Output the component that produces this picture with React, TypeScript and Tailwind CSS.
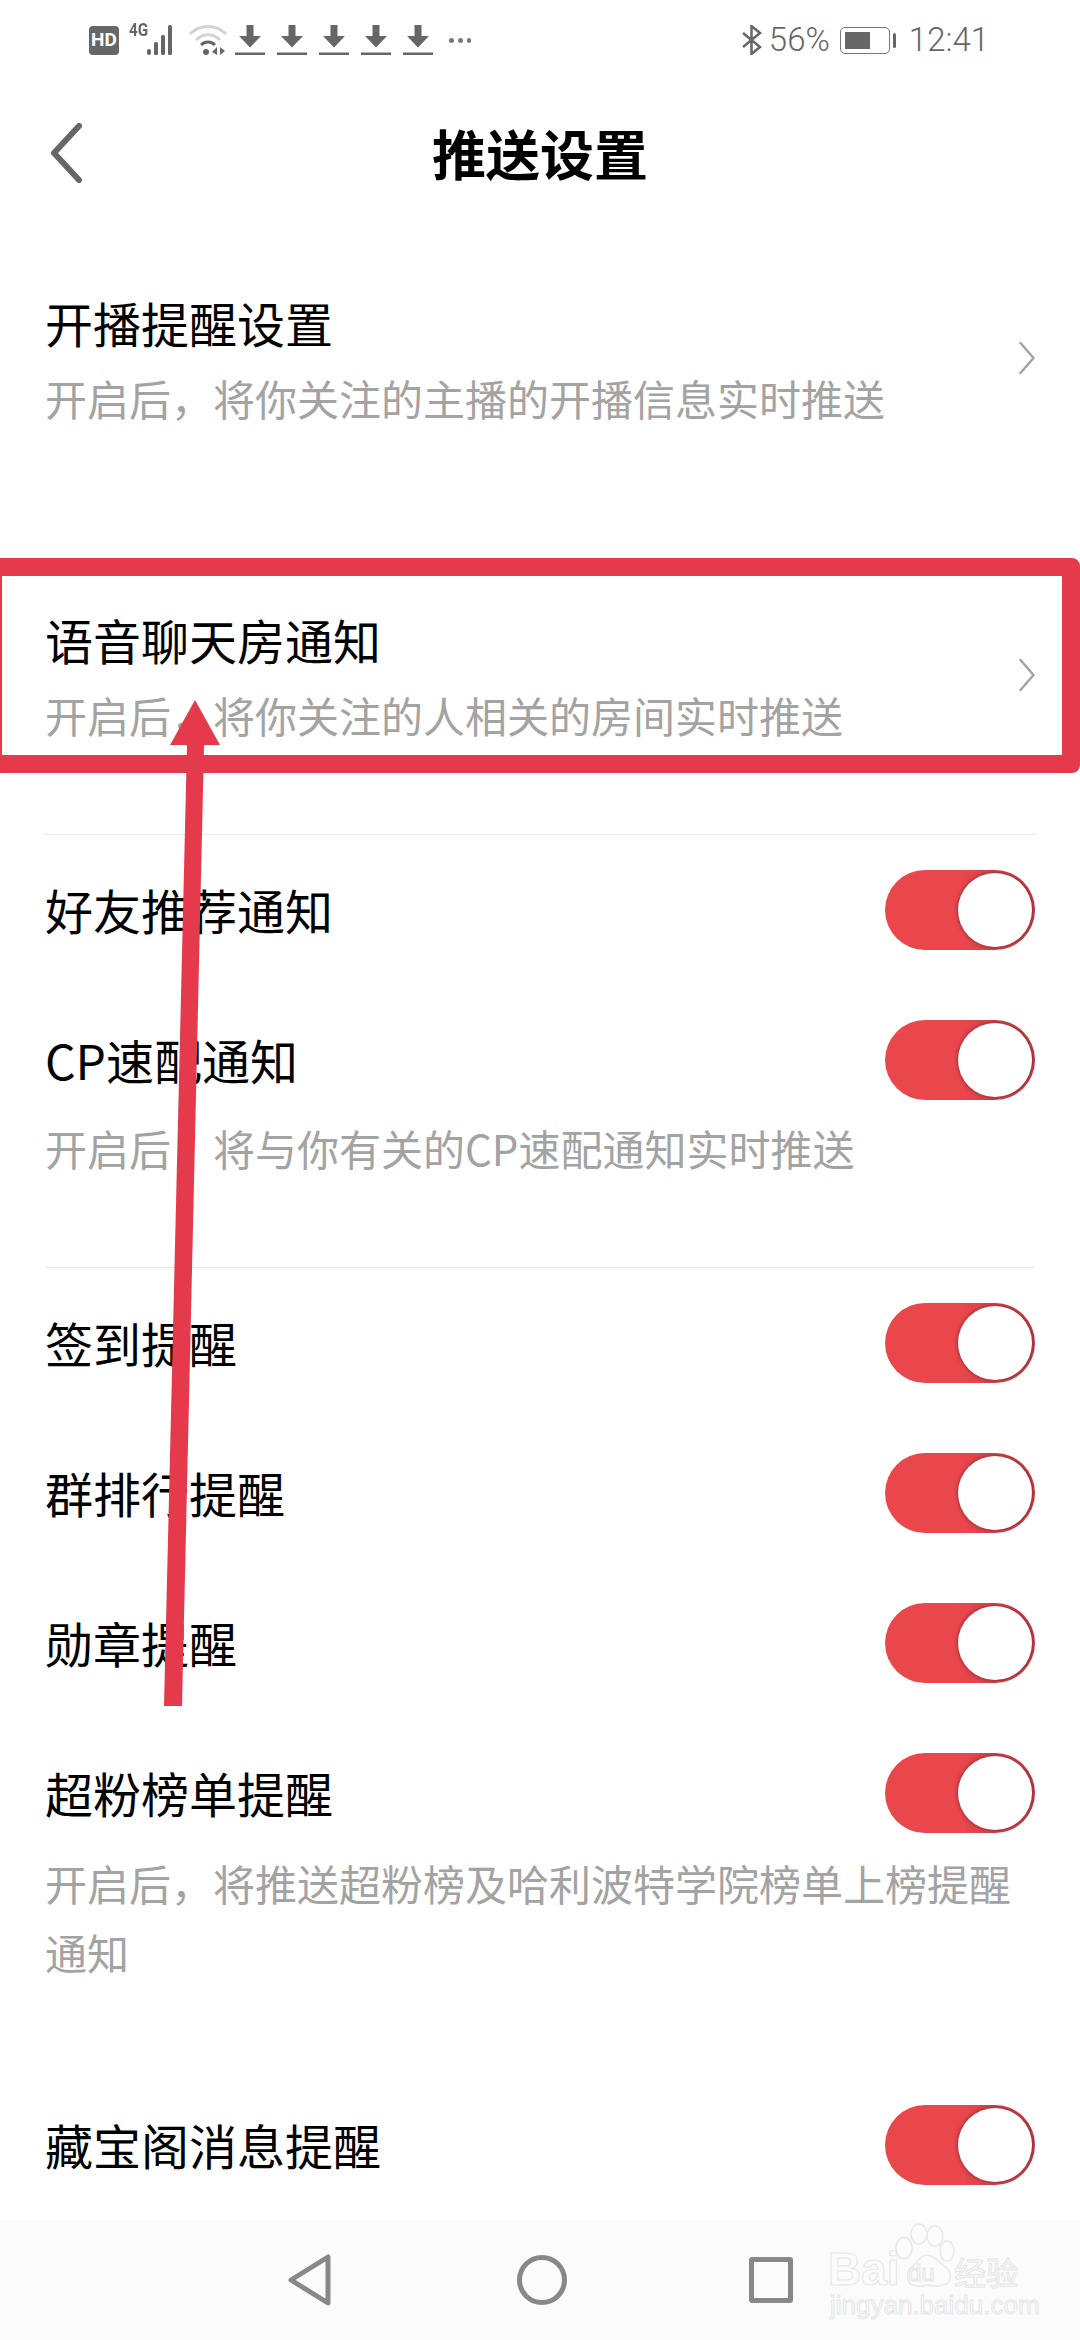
import React from 'react';

const font = "font-['Noto_Sans_CJK_SC','Noto_Sans',sans-serif]";

const Toggle = () => (
  <div className="flex items-center justify-end w-[150px] h-[80px] pr-[3px] rounded-full bg-linear-to-r from-[#ea474d] from-50% to-[#bf3f48]">
    <div className="w-[74px] h-[74px] rounded-full bg-white shadow-[0_0_4px_rgba(110,20,30,0.8)]" />
  </div>
);

const ToggleRow = ({ title }: { title: string }) => (
  <div className="flex items-center justify-between h-[150px]">
    <span className="-mt-[3px] text-[48px] leading-[60px] text-black">{title}</span>
    <Toggle />
  </div>
);

const Chevron = () => (
  <svg width="18" height="34" viewBox="0 0 18 34" fill="none" className="mt-[-4px]">
    <path d="M3.5 2 L16.5 17 L3.5 32" stroke="#a3a3a3" strokeWidth="2.5" strokeLinecap="round" strokeLinejoin="round" />
  </svg>
);

const LinkRow = ({ title, sub }: { title: string; sub: string }) => (
  <div className="flex items-center justify-between">
    <div className="flex flex-col gap-[16px]">
      <span className="text-[48px] leading-[60px] text-black">{title}</span>
      <span className="text-[42px] leading-[60px] text-[#a3a3a3]">{sub}</span>
    </div>
    <Chevron />
  </div>
);

const DownloadIcon = () => (
  <svg width="30" height="32" viewBox="0 0 30 32" fill="#666666">
    <path d="M11.5 1 H18.5 V12 H26 L15 23.5 L4 12 H11.5 Z" />
    <rect x="0" y="28.5" width="30" height="2.5" />
  </svg>
);

const StatusBar = () => (
  <div className="flex items-center justify-between h-[80px] pl-[89px] pr-[91px] text-[#666666]">
    <div className="flex items-center">
      <div className="flex items-center justify-center w-[30px] h-[29px] rounded-[4px] bg-[#666666] text-white text-[19px] font-bold font-['Roboto',sans-serif]">HD</div>
      <div className="relative ml-[10px] w-[50px] h-[30px]">
        <span className="absolute left-0 top-[-5px] text-[18px] leading-[20px] font-bold font-['Roboto',sans-serif] scale-x-[0.85] origin-left">4G</span>
        <svg width="50" height="30" viewBox="0 0 50 30" fill="#666666">
          <rect x="18" y="24" width="4" height="6" rx="2" />
          <rect x="25" y="17" width="4" height="13" rx="1.5" />
          <rect x="32" y="10" width="4" height="20" rx="1.5" />
          <rect x="39" y="0" width="4" height="30" rx="1.5" />
        </svg>
      </div>
      <svg width="40" height="30" viewBox="0 0 40 30" fill="none" className="ml-[9px]">
        <path d="M2 9 C12 -1 28 -1 38 9" stroke="#d2d2d2" strokeWidth="3" />
        <path d="M8 15 C15 8 25 8 32 15" stroke="#d2d2d2" strokeWidth="3" />
        <path d="M13 20 C17 16 23 16 27 20" stroke="#666666" strokeWidth="3" />
        <circle cx="18" cy="27" r="3" fill="#666666" />
        <path d="M29 22 V30 L24 27 Z M32 22 L37 26 L32 30 Z" fill="#666666" />
      </svg>
      <div className="flex items-center gap-[12px] ml-[7px]">
        <DownloadIcon />
        <DownloadIcon />
        <DownloadIcon />
        <DownloadIcon />
        <DownloadIcon />
      </div>
      <div className="flex items-center gap-[4px] ml-[16px]">
        <div className="w-[5px] h-[5px] rounded-full bg-[#777777]" />
        <div className="w-[5px] h-[5px] rounded-full bg-[#777777]" />
        <div className="w-[4px] h-[5px] rounded-full bg-[#777777]" />
      </div>
    </div>
    <div className="flex items-center font-['Roboto',sans-serif] font-light text-[33px] leading-[40px]">
      <svg width="20" height="30" viewBox="0 0 20 30" fill="none" stroke="#666666" strokeWidth="2.5">
        <path d="M1 8 L18 22 L9.5 29 V1 L18 8 L1 22" />
      </svg>
      <span className="ml-[7px]">56%</span>
      <div className="ml-[10px] flex items-center w-[50px] h-[27px] p-[4px] rounded-[5px] border-[1.5px] border-[#777777]">
        <div className="w-[25px] h-full bg-[#666666]" />
      </div>
      <div className="ml-[3px] w-[3px] h-[15px] rounded-full bg-[#666666]" />
      <span className="ml-[13px]">12:41</span>
    </div>
  </div>
);

const Header = () => (
  <div className="relative flex items-center justify-center h-[146px]">
    <svg width="34" height="60" viewBox="0 0 34 60" fill="none" className="absolute left-[49px] top-[43px]">
      <path d="M30 3 L5 30 L30 57" stroke="#666666" strokeWidth="6" strokeLinecap="round" strokeLinejoin="round" />
    </svg>
    <span className="text-[54px] leading-[64px] font-bold text-black">推送设置</span>
  </div>
);

const NavBar = () => (
  <div className="relative flex items-center justify-center h-[120px] bg-[#fbfbfb]">
    <div className="flex items-center">
      <svg width="44" height="52" viewBox="0 0 44 52" fill="none">
        <path d="M40 3 V49 L3 26 Z" stroke="#888888" strokeWidth="5" strokeLinejoin="round" />
      </svg>
      <div className="ml-[185px] w-[50px] h-[50px] rounded-full border-[5px] border-[#888888]" />
      <div className="ml-[182px] w-[44px] h-[46px] rounded-[3px] border-[5px] border-[#888888]" />
    </div>
  </div>
);

const Watermark = () => (
  <div className="absolute left-[828px] top-[2223px] w-[195px] h-[96px] text-transparent [-webkit-text-stroke:1px_#e6e6e6] font-['Liberation_Sans',sans-serif]">
    <svg width="66" height="66" viewBox="0 0 66 66" fill="none" stroke="#e8e8e8" strokeWidth="1.5" className="absolute left-[65px] top-0">
      <ellipse cx="11" cy="25" rx="8" ry="11" />
      <ellipse cx="26" cy="11" rx="8" ry="10" />
      <ellipse cx="42" cy="13" rx="8" ry="10" />
      <ellipse cx="54" cy="28" rx="7" ry="10" />
      <path d="M34 32 C27 32 25 39 20 43 C13 47 11 62 24 63 C29 64 31 62 34 62 C38 62 41 64 47 63 C60 62 60 48 51 43 C45 39 42 32 34 32 Z" />
    </svg>
    <span className="absolute left-0 top-[27px] text-[46px] leading-[38px] font-bold">Bai</span>
    <span className="absolute left-[80px] top-[38px] text-[24px] leading-[24px]">du</span>
    <span className={`absolute left-[126px] top-[30px] text-[32px] leading-[36px] ${font}`}>经验</span>
    <span className="absolute left-[2px] top-[69px] text-[26px] leading-[26px] whitespace-nowrap">jingyan.baidu.com</span>
  </div>
);

export default function App() {
  return (
    <div className={`relative w-[1080px] h-[2340px] overflow-hidden bg-white ${font}`}>
      <StatusBar />
      <Header />
      <div className="flex flex-col px-[45px] pt-[66px] h-[1994px]">
        <LinkRow title="开播提醒设置" sub="开启后，将你关注的主播的开播信息实时推送" />
        <div className="mt-[181px]">
          <LinkRow title="语音聊天房通知" sub="开启后，将你关注的人相关的房间实时推送" />
        </div>
        <div className="mt-[89px] border-t border-[#e8e8e8]" />
        <ToggleRow title="好友推荐通知" />
        <ToggleRow title="CP速配通知" />
        <span className="-mt-[17px] text-[42px] leading-[60px] text-[#a3a3a3]">开启后，将与你有关的CP速配通知实时推送</span>
        <div className="mt-[89px] border-t border-[#e8e8e8]" />
        <ToggleRow title="签到提醒" />
        <ToggleRow title="群排行提醒" />
        <ToggleRow title="勋章提醒" />
        <ToggleRow title="超粉榜单提醒" />
        <span className="-mt-[20px] text-[42px] leading-[69px] text-[#a3a3a3]">开启后，将推送超粉榜及哈利波特学院榜单上榜提醒通知</span>
        <div className="mt-[84px]">
          <ToggleRow title="藏宝阁消息提醒" />
        </div>
      </div>
      <NavBar />

      {/* red annotation box and arrow drawn over the page */}
      <div className="absolute left-[-16px] top-[558px] w-[1096px] h-[215px] rounded-[8px] border-[18px] border-[#e43a4b] blur-[0.6px]" />
      <svg width="1080" height="2340" viewBox="0 0 1080 2340" className="absolute left-0 top-0 pointer-events-none blur-[0.6px]">
        <path d="M195 700 L220 745 H204 L182 1706 H164 L187 745 H170 Z" fill="#e43a4b" />
      </svg>
      <Watermark />
    </div>
  );
}
